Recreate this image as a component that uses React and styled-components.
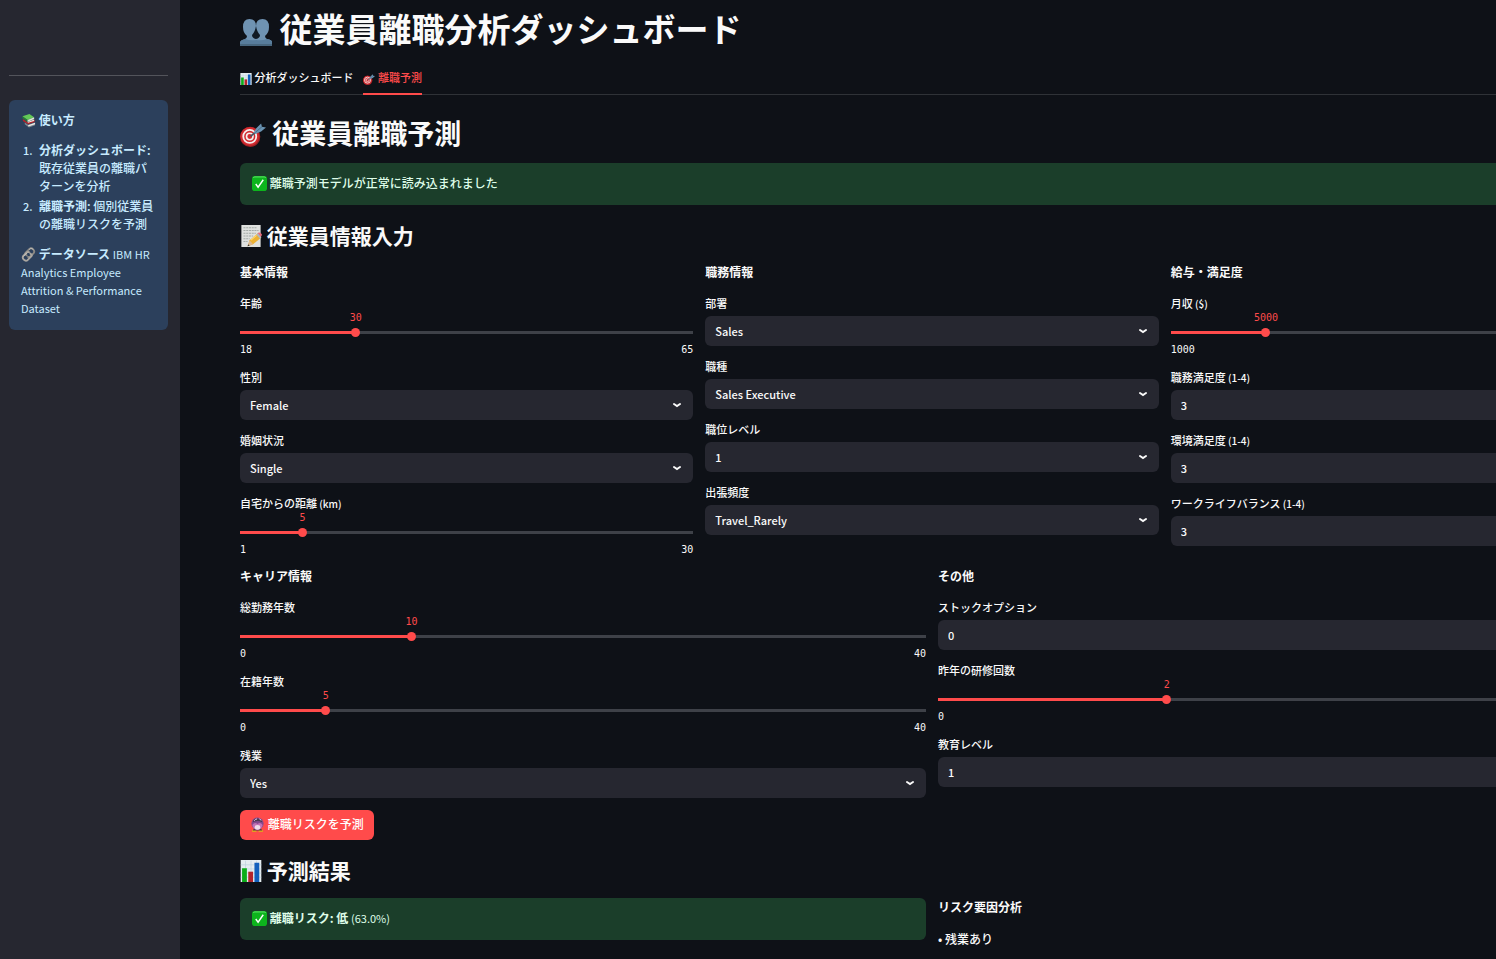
import React, { useId, useState } from 'react';
import styled, { createGlobalStyle, css } from 'styled-components';

const sans = '"Noto Sans CJK JP", "Noto Sans", sans-serif';
const mono = '"DejaVu Sans Mono", monospace';

const colors = {
  page: '#0e1117',
  panel: '#262730',
  text: '#fafafa',
  primary: '#ff4b4b',
  track: '#3e4148',
  border: '#2f3237',
  success: '#1b3e2a',
  successText: '#dffde9',
  info: '#2c405c',
  infoText: '#c7ebff'
};

const GlobalStyle = createGlobalStyle`
  * { box-sizing: border-box; }
  body {
    margin: 0;
    overflow: hidden;
    background: ${colors.page};
    color: ${colors.text};
    font: 500 12px/18px ${sans};
  }
`;

const Shell = styled.div`
  display: flex;
  min-height: 100vh;
`;

const Sidebar = styled.aside`
  flex: 0 0 180px;
  padding: 75px 12px 0 9px;
  background: ${colors.panel};
`;

const Rule = styled.hr`
  height: 1px;
  margin: 0 0 24px;
  border: 0;
  background: #53545b;
`;

const InfoBox = styled.section`
  padding: 11px 12px 13px;
  border-radius: 6px;
  background: ${colors.info};
  color: ${colors.infoText};
`;

const Paragraph = styled.p`
  margin: 0;
`;

const Latin = styled.span`
  font-size: 11px;
  font-weight: 400;
`;

const Steps = styled.ol`
  display: grid;
  gap: 2px;
  margin: 12px 0;
  padding-left: 14px;
`;

const Step = styled.li`
  padding-left: 4px;

  &::marker { font-size: 11px; }
`;

/* the block runs on past the right edge of the window */
const Main = styled.main`
  flex: 1;
  min-width: 0;
  margin-right: -128px;
  padding: 8px 0 0 60px;
`;

const titleSizes = {
  h1: css`font-size: 33px; line-height: 40px; margin: 0;`,
  h2: css`font-size: 27px; line-height: 32px; margin: 22px 0 14px;`,
  h3: css`font-size: 21px; line-height: 26px; margin: 17px 0 15px;`
};

const Title = styled.h1`
  font-weight: 700;
  ${({ as = 'h1' }) => titleSizes[as]}
`;

const TabList = styled.div`
  display: flex;
  gap: 10px;
  margin-top: 17px;
  border-bottom: 1px solid ${colors.border};
`;

const Tab = styled.button`
  height: 30px;
  margin-bottom: -1px;
  padding: 0 0 4px;
  border: 0;
  border-bottom: 2px solid ${({ $active }) => ($active ? colors.primary : 'transparent')};
  background: none;
  color: ${({ $active }) => ($active ? colors.primary : colors.text)};
  font: 500 11px/18px ${sans};
  cursor: pointer;
`;

const Alert = styled.div`
  align-self: start;
  padding: 11px 12px 13px;
  border-radius: 6px;
  background: ${colors.success};
  color: ${colors.successText};
`;

const Columns = styled.div`
  display: grid;
  grid-template-columns: repeat(${({ $count }) => $count}, minmax(0, 1fr));
  gap: 12px;
  margin-top: ${({ $spaced }) => ($spaced ? 10 : 0)}px;
`;

const Column = styled.div`
  display: flex;
  flex-direction: column;
  gap: 12px;
`;

const Heading = styled.h4`
  margin: 0 0 2px;
  font-size: 12px;
  line-height: 18px;
  font-weight: 700;
`;

const Label = styled.label`
  display: block;
  height: 18px;
  font-size: 11px;
  line-height: 16px;
`;

const Scale = styled.span`
  font-size: 10px;
`;

const SelectWrap = styled.div`
  position: relative;
  margin-top: 3px;
`;

const SelectBox = styled.select`
  display: block;
  appearance: none;
  width: 100%;
  height: 30px;
  padding: 0 30px 1px 10px;
  border: 0;
  border-radius: 6px;
  background: ${colors.panel};
  color: ${colors.text};
  font: 500 11px/18px ${sans};
`;

const Chevron = styled.svg`
  position: absolute;
  top: 9px;
  right: 10px;
  width: 12px;
  height: 12px;
  pointer-events: none;
`;

const SliderBox = styled.div`
  padding-bottom: 1px;
`;

const ValueRow = styled.div`
  position: relative;
  height: 15px;
`;

const Value = styled.output`
  position: absolute;
  transform: translateX(-50%);
  color: ${colors.primary};
  font: 400 10px/10px ${mono};
`;

const Rail = styled.div`
  height: 9px;
  padding: 3px 0;
  background-clip: content-box;
`;

const Range = styled.input`
  display: block;
  appearance: none;
  width: calc(100% + 10px);
  height: 9px;
  margin: -3px -5px;
  background: transparent;

  &::-webkit-slider-thumb {
    appearance: none;
    width: 9px;
    height: 9px;
    border-radius: 50%;
    background: ${colors.primary};
  }
`;

const Limits = styled.div`
  display: flex;
  justify-content: space-between;
  margin-top: 7px;
  font: 400 10px/12px ${mono};
`;

const PredictButton = styled.button`
  height: 30px;
  margin-top: 12px;
  padding: 0 10px 2px;
  border: 0;
  border-radius: 6px;
  background: ${colors.primary};
  color: #fff;
  font: 500 12px/18px ${sans};
  cursor: pointer;
`;

const EmojiSvg = styled.svg`
  display: inline-block;
  width: ${({ $size }) => $size}px;
  height: ${({ $size }) => $size}px;
  vertical-align: ${({ $size }) => ($size > 30 ? -5 : -3)}px;
`;

const drawings = {
  people: (
    <g>
      <path d="M0 31v-4q1-2 5-3 2-1 2-3-4-3-4-9 0-8 6.500-8t6.500 7q0-7 6.500-7t6.500 8q0 6-4 9 0 2 2 3 5 1 5 3v4z" fill="#6f93b2" />
      <path d="M0 31v-4q1-2 5-3 5 2 11 1 6 1 11-1 5 1 5 3v4z" fill="#587d9c" />
      <path d="M0 29h32v2H0z" fill="#48677f" />
      <path d="M16 11q-1 6-4 9 0 3 4 4 4-1 4-4-3-3-4-9" fill="#101a25" />
    </g>
  ),
  chart: (
    <g>
      <path d="M1 0h30v32H1z" fill="#e5edf1" />
      <path d="M1 7h30M1 13h30M1 19h30M1 25h30M8 1v30M16 1v30M24 1v30" stroke="#bcd2de" />
      <path d="M3 12h7v20H3z" fill="#0cae19" />
      <path d="M12 17h7v15h-7z" fill="#b4252c" />
      <path d="M21 4h7v28h-7z" fill="#1260bd" />
    </g>
  ),
  target: (
    <g>
      <circle cx="12.500" cy="19.500" r="12.500" fill="#9e2024" />
      <circle cx="12" cy="19" r="11.500" fill="#d12a2f" />
      <circle cx="12" cy="19" r="8" fill="none" stroke="#f5eeee" strokeWidth="2.200" />
      <circle cx="12" cy="19" r="4" fill="none" stroke="#f5eeee" strokeWidth="2" />
      <path d="M13 19 22 11" stroke="#425765" strokeWidth="2" />
      <path d="m17 14 3-5 6-6 1 4 5 1-6 5-7 3z" fill="#6a93b2" />
      <path d="m19 14 8-7" stroke="#40647e" />
    </g>
  ),
  check: (
    <g>
      <rect width="32" height="32" rx="6" fill="#0db51d" />
      <path d="M3 4q0-2 3-2h20q3 0 3 2" fill="none" stroke="#66e570" strokeWidth="2" />
      <path d="m8 17 5 7L24 8" fill="none" stroke="#fff" strokeWidth="3" />
    </g>
  ),
  memo: (
    <g>
      <path d="M2 0h28v32H2z" fill="#dfe1df" />
      <path d="M5 4h20M5 8h22M5 12h18M5 16h14M5 20h9M5 24h6" stroke="#a4aaa7" strokeWidth="1.500" strokeDasharray="3 1" />
      <path d="m11 31 3-9 12-10 5 6-12 10z" fill="#edb233" />
      <path d="m25 13 2-2q3-1 5 3l-2 4z" fill="#e86c7c" />
      <path d="m24 14 5 6 2-2-5-6z" fill="#aeb9bd" />
      <path d="m11 31 3-9 5 6z" fill="#ddb993" />
      <path d="m11 31 1-3 2 2z" fill="#333" />
      <path d="m16 22 8-7" stroke="#ffda70" strokeWidth="1.500" />
    </g>
  ),
  ball: (
    <g>
      <path d="M5 27h8l1 5H4zM19 27h8l1 5H18z" fill="#e59d22" />
      <path d="M8 25h16l2 4H6z" fill="#5a3d43" />
      <circle cx="16" cy="14" r="13" fill="#84498e" />
      <path d="M5 17q5-7 11-2 6-5 11 2-2 10-11 10T5 17" fill="#c271b4" />
      <ellipse cx="16" cy="22" rx="6" ry="5" fill="#f0dcea" />
      <path d="M7 7q8-8 18 0l1 4q-10-5-20 0z" fill="#4d3a50" />
      <path d="M9 8q2-3 6-4M20 4l4 3" fill="none" stroke="#eed5f2" strokeWidth="2" />
    </g>
  ),
  books: (
    <g>
      <path d="m3 7 15-5 10 7-14 6z" fill="#63c957" />
      <path d="m3 7 11 8v4L3 11z" fill="#277e36" />
      <path d="m14 15 14-6v4l-14 6z" fill="#dfe8d6" />
      <path d="m4 13 10 7 15-6v5l-14 5-11-7z" fill="#ba2529" />
      <path d="m14 19 14-5v3l-13 4z" fill="#eee6df" />
      <path d="m8 20 7 5 15-5v6l-13 5-9-7z" fill="#7b8590" />
      <path d="m15 26 15-5v3l-14 5z" fill="#ece9e3" />
    </g>
  ),
  link: (
    <g fill="none" strokeLinecap="round">
      <path d="m12 18-2-2q-2-2 0-4l8-8q4-3 8 1t1 8l-7 7q-2 2-5 1" stroke="#8b8985" strokeWidth="4" />
      <path d="m20 14 2 2q2 2 0 4l-8 8q-4 3-8-1t-1-8l7-7q2-2 5-1" stroke="#aaa6a0" strokeWidth="4" />
      <path d="m18 5 2-2q3-1 6 2M6 19l6-6" stroke="#dad6cf" strokeWidth="1.500" />
    </g>
  )
};

const Emoji = ({ name, size = 15 }) => (
  <EmojiSvg $size={size} viewBox="0 0 32 32" aria-hidden="true">
    {drawings[name]}
  </EmojiSvg>
);

const FieldLabel = ({ id, label, scale }) => (
  <Label htmlFor={id}>
    {label}
    {scale && <Scale> ({scale})</Scale>}
  </Label>
);

const Select = ({ label, scale, options }) => {
  const id = useId();

  return (
    <div>
      <FieldLabel id={id} label={label} scale={scale} />
      <SelectWrap>
        <SelectBox id={id}>
          {options.map(option => (
            <option key={option}>{option}</option>
          ))}
        </SelectBox>
        <Chevron viewBox="0 0 12 12" aria-hidden="true">
          <path d="m3 5 3 2 3-2" fill="none" stroke="#fafafa" strokeWidth="2" strokeLinecap="round" />
        </Chevron>
      </SelectWrap>
    </div>
  );
};

const Slider = ({ label, scale, min, max, initial, step = 1 }) => {
  const id = useId();
  const [value, setValue] = useState(initial);
  const percent = ((value - min) / (max - min)) * 100;
  const fill = `linear-gradient(to right, ${colors.primary} ${percent}%, ${colors.track} ${percent}%)`;

  return (
    <SliderBox>
      <FieldLabel id={id} label={label} scale={scale} />
      <ValueRow>
        <Value htmlFor={id} style={{ left: `${percent}%` }}>{value}</Value>
      </ValueRow>
      <Rail style={{ backgroundImage: fill }}>
        <Range
          id={id}
          type="range"
          min={min}
          max={max}
          step={step}
          value={value}
          onChange={event => setValue(Number(event.target.value))}
        />
      </Rail>
      <Limits>
        <span>{min}</span>
        <span>{max}</span>
      </Limits>
    </SliderBox>
  );
};

const Guide = () => (
  <Sidebar>
    <Rule />
    <InfoBox>
      <Paragraph><Emoji name="books" /> <strong>使い方</strong></Paragraph>
      <Steps>
        <Step><strong>分析ダッシュボード</strong>: 既存従業員の離職パターンを分析</Step>
        <Step><strong>離職予測</strong>: 個別従業員の離職リスクを予測</Step>
      </Steps>
      <Paragraph>
        <Emoji name="link" /> <strong>データソース</strong>{' '}
        <Latin>IBM HR Analytics Employee Attrition &amp; Performance Dataset</Latin>
      </Paragraph>
    </InfoBox>
  </Sidebar>
);

const tabs = [
  { icon: 'chart', label: '分析ダッシュボード' },
  { icon: 'target', label: '離職予測' }
];

const App = () => {
  const [active, setActive] = useState(1);

  return (
    <Shell>
      <GlobalStyle />
      <Guide />
      <Main>
        <Title><Emoji name="people" size={32} /> 従業員離職分析ダッシュボード</Title>
        <TabList role="tablist">
          {tabs.map(({ icon, label }, index) => (
            <Tab
              key={label}
              role="tab"
              aria-selected={active === index}
              $active={active === index}
              onClick={() => setActive(index)}
            >
              <Emoji name={icon} size={12} /> {label}
            </Tab>
          ))}
        </TabList>

        <Title as="h2"><Emoji name="target" size={26} /> 従業員離職予測</Title>
        <Alert role="status"><Emoji name="check" /> 離職予測モデルが正常に読み込まれました</Alert>

        <Title as="h3"><Emoji name="memo" size={22} /> 従業員情報入力</Title>
        <Columns $count={3}>
          <Column>
            <Heading>基本情報</Heading>
            <Slider label="年齢" min={18} max={65} initial={30} />
            <Select label="性別" options={['Female', 'Male']} />
            <Select label="婚姻状況" options={['Single', 'Married', 'Divorced']} />
            <Slider label="自宅からの距離" scale="km" min={1} max={30} initial={5} />
          </Column>
          <Column>
            <Heading>職務情報</Heading>
            <Select label="部署" options={['Sales', 'Research & Development', 'Human Resources']} />
            <Select label="職種" options={['Sales Executive', 'Research Scientist', 'Manager']} />
            <Select label="職位レベル" options={[1, 2, 3, 4, 5]} />
            <Select label="出張頻度" options={['Travel_Rarely', 'Travel_Frequently', 'Non-Travel']} />
          </Column>
          <Column>
            <Heading>給与・満足度</Heading>
            <Slider label="月収" scale="$" min={1000} max={20000} initial={5000} step={100} />
            <Select label="職務満足度" scale="1-4" options={[3, 1, 2, 4]} />
            <Select label="環境満足度" scale="1-4" options={[3, 1, 2, 4]} />
            <Select label="ワークライフバランス" scale="1-4" options={[3, 1, 2, 4]} />
          </Column>
        </Columns>

        <Columns $count={2} $spaced>
          <Column>
            <Heading>キャリア情報</Heading>
            <Slider label="総勤務年数" min={0} max={40} initial={10} />
            <Slider label="在籍年数" min={0} max={40} initial={5} />
            <Select label="残業" options={['Yes', 'No']} />
          </Column>
          <Column>
            <Heading>その他</Heading>
            <Select label="ストックオプション" options={[0, 1, 2, 3]} />
            <Slider label="昨年の研修回数" min={0} max={6} initial={2} />
            <Select label="教育レベル" options={[1, 2, 3, 4, 5]} />
          </Column>
        </Columns>
        <PredictButton><Emoji name="ball" /> 離職リスクを予測</PredictButton>

        <Title as="h3"><Emoji name="chart" size={22} /> 予測結果</Title>
        <Columns $count={2}>
          <Alert role="status">
            <Emoji name="check" /> <strong>離職リスク: 低</strong> <Latin>(63.0%)</Latin>
          </Alert>
          <Column>
            <Heading>リスク要因分析</Heading>
            <Paragraph>• 残業あり</Paragraph>
          </Column>
        </Columns>
      </Main>
    </Shell>
  );
};

export default App;
